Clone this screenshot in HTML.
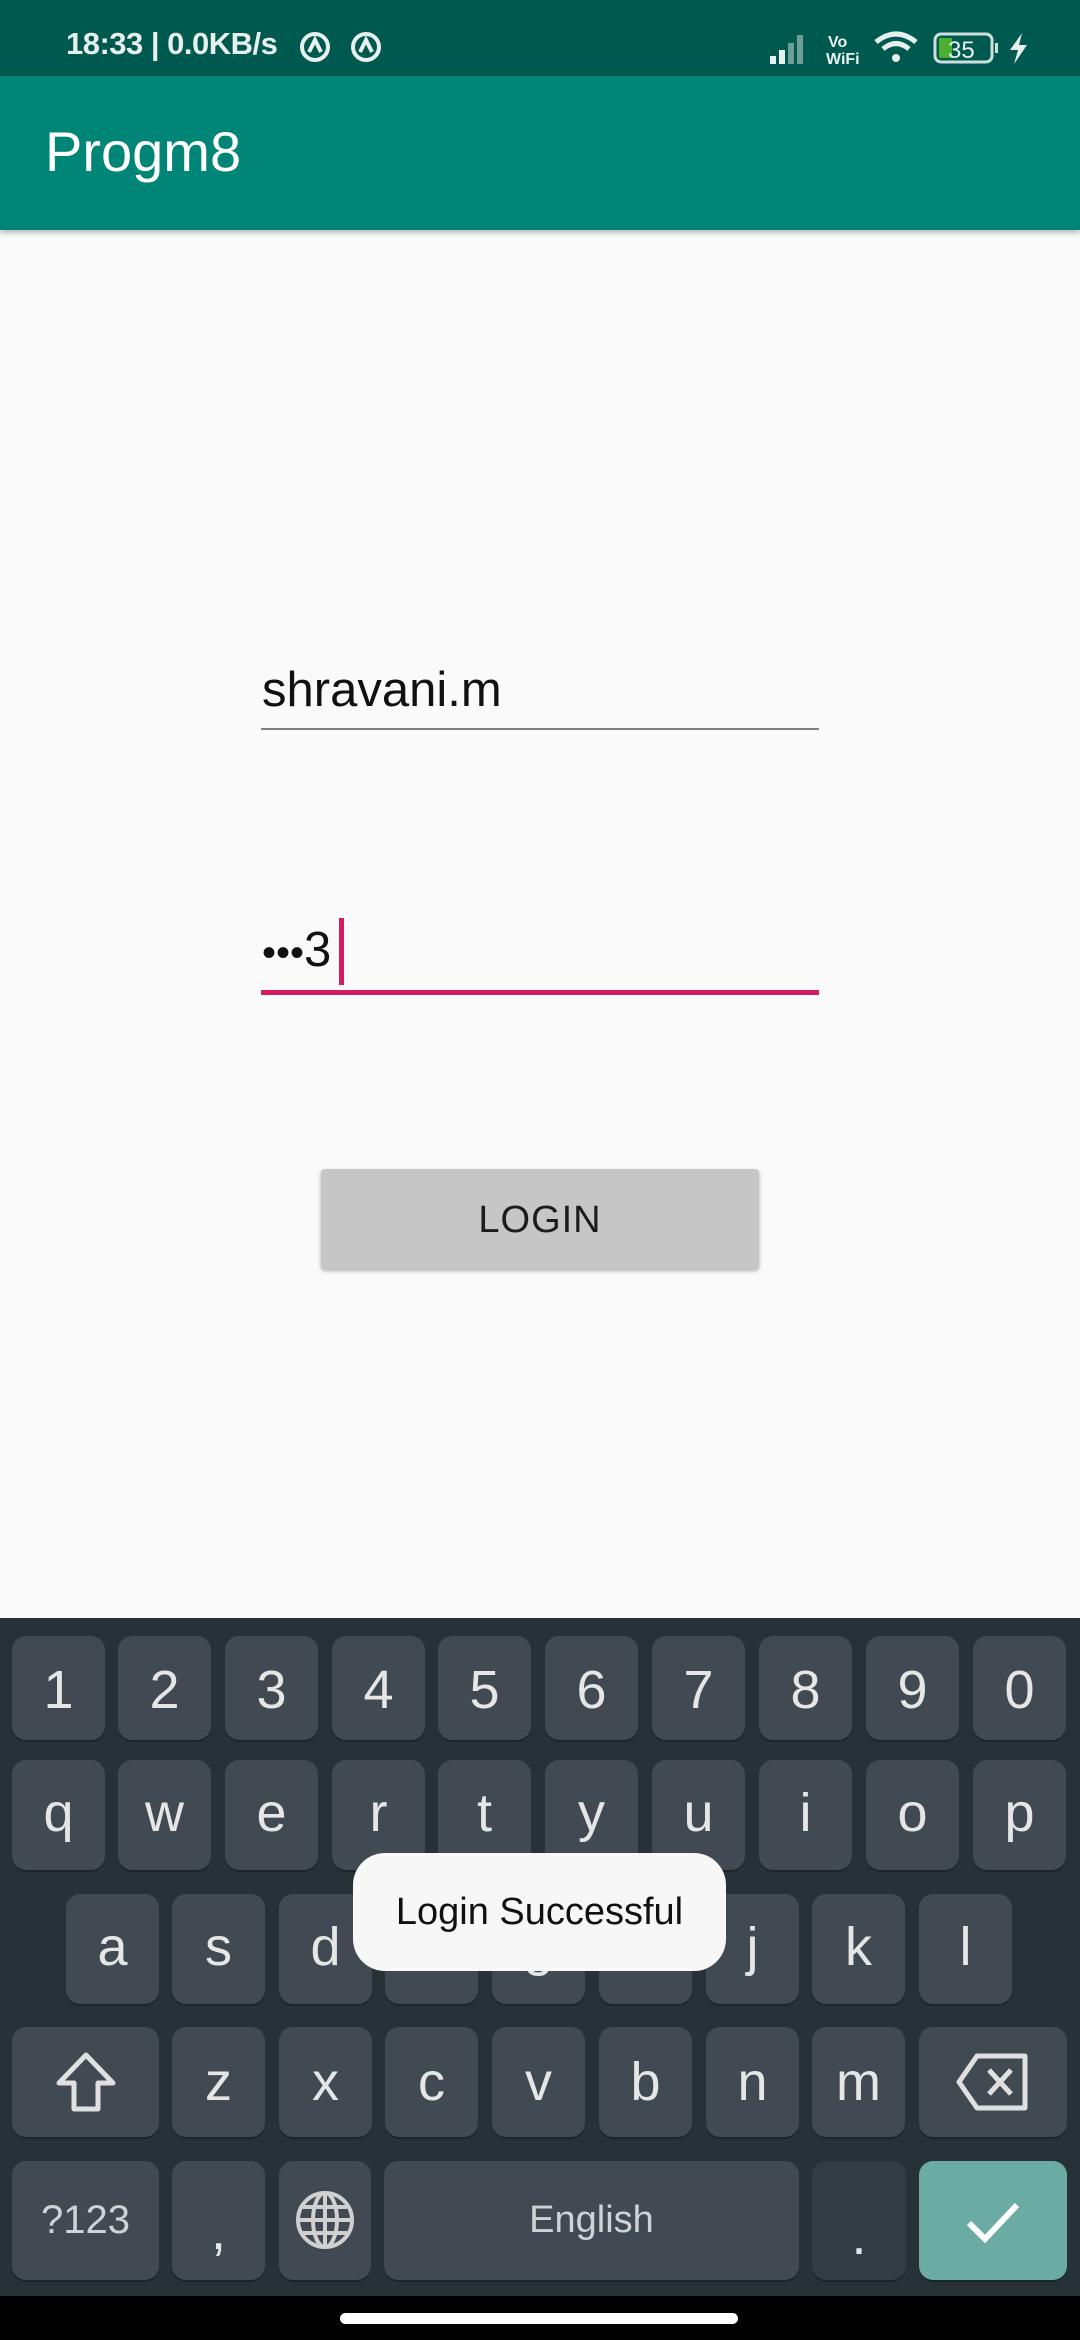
<!DOCTYPE html>
<html><head><meta charset="utf-8"><style>
*{margin:0;padding:0;box-sizing:border-box}
body{width:1080px;height:2340px;position:relative;background:#fafafa;font-family:"Liberation Sans",sans-serif;overflow:hidden}
.abs{position:absolute}
.sb{left:0;top:0;width:1080px;height:76px;background:#00594e}
.ab{left:0;top:76px;width:1080px;height:154px;background:#008577;box-shadow:0 3px 5px rgba(0,0,0,.25)}
.kb{left:0;top:1618px;width:1080px;height:678px;background:#263238}
.k{position:absolute;background:#414a52;border-radius:14px;color:#e6e6e6;font-size:54px;text-align:center;box-shadow:0 2px 0 rgba(0,0,0,.25)}
.r1 .k{top:18px;height:104px;line-height:108px}
.r2 .k{top:142px;height:110px;line-height:106px}
.r3 .k{top:276px;height:110px;line-height:106px}
.r4 .k{top:409px;height:110px;line-height:110px}
.r5 .k{top:543px;height:119px;line-height:119px}
.nav{left:0;top:2296px;width:1080px;height:44px;background:#000}
</style></head><body>
<div class="abs sb"></div>
<div class="abs" style="left:66px;top:26px;color:#e8f0ee;font-size:31px;font-weight:bold;letter-spacing:-0.5px">18:33 | 0.0KB/s</div>
<svg class="abs" style="left:298px;top:30px" width="90" height="36" viewBox="0 0 90 36">
<circle cx="17" cy="17" r="13" fill="none" stroke="#e8f0ee" stroke-width="4"/><path d="M11 22 L17 10 L23 22" fill="none" stroke="#e8f0ee" stroke-width="4"/>
<circle cx="68" cy="17" r="13" fill="none" stroke="#e8f0ee" stroke-width="4"/><path d="M62 22 L68 10 L74 22" fill="none" stroke="#e8f0ee" stroke-width="4"/>
</svg>
<svg class="abs" style="left:768px;top:30px" width="270" height="38" viewBox="0 0 270 38">
<rect x="2" y="26" width="6" height="8" fill="#e8f0ee"/><rect x="11" y="20" width="6" height="14" fill="#e8f0ee"/><rect x="20" y="13" width="6" height="21" fill="#6f9e95"/><rect x="29" y="5" width="6" height="29" fill="#6f9e95"/>
<text x="60" y="17" font-size="16" font-weight="bold" fill="#e8f0ee" font-family="Liberation Sans">Vo</text>
<text x="58" y="34" font-size="16" font-weight="bold" fill="#e8f0ee" font-family="Liberation Sans">WiFi</text>
<path d="M108 12 Q128 -4 148 12" fill="none" stroke="#e8f0ee" stroke-width="5"/><path d="M115 19 Q128 8 141 19" fill="none" stroke="#e8f0ee" stroke-width="5"/><circle cx="128" cy="28" r="4" fill="#e8f0ee"/>
<rect x="167" y="4" width="57" height="28" rx="6" fill="none" stroke="#cfe0dc" stroke-width="3"/><rect x="171" y="8" width="13" height="20" fill="#4caf30"/>
<text x="180" y="28" font-size="24" fill="#e8f0ee" font-family="Liberation Sans">35</text>
<rect x="227" y="13" width="3" height="10" fill="#cfe0dc"/>
<path d="M254 3 L242 20 L250 20 L246 34 L259 15 L251 15 Z" fill="#e8f0ee"/>
</svg>
<div class="abs ab"></div>
<div class="abs" style="left:45px;top:120px;color:#fff;font-size:56px;line-height:64px">Progm8</div>

<div class="abs" style="left:262px;top:662px;font-size:49px;color:#111">shravani.m</div>
<div class="abs" style="left:261px;top:728px;width:558px;height:2px;background:#808080"></div>
<div class="abs" style="left:262px;top:922px;font-size:49px;color:#111"><span style="font-size:40px">•••</span>3</div>
<div class="abs" style="left:339px;top:918px;width:5px;height:67px;background:#d41c63"></div>
<div class="abs" style="left:261px;top:990px;width:558px;height:5px;background:#d41c63"></div>

<div class="abs" style="left:321px;top:1169px;width:438px;height:100px;background:#c6c6c6;border-radius:4px;box-shadow:0 2px 4px rgba(0,0,0,.3);text-align:center;line-height:102px;font-size:38px;color:#1c1c1c;letter-spacing:1px">LOGIN</div>

<div class="abs kb">
<div class="r1">
<div class="k" style="left:12px;width:93px">1</div><div class="k" style="left:118px;width:93px">2</div><div class="k" style="left:225px;width:93px">3</div><div class="k" style="left:332px;width:93px">4</div><div class="k" style="left:438px;width:93px">5</div><div class="k" style="left:545px;width:93px">6</div><div class="k" style="left:652px;width:93px">7</div><div class="k" style="left:759px;width:93px">8</div><div class="k" style="left:866px;width:93px">9</div><div class="k" style="left:973px;width:93px">0</div>
</div>
<div class="r2">
<div class="k" style="left:12px;width:93px">q</div><div class="k" style="left:118px;width:93px">w</div><div class="k" style="left:225px;width:93px">e</div><div class="k" style="left:332px;width:93px">r</div><div class="k" style="left:438px;width:93px">t</div><div class="k" style="left:545px;width:93px">y</div><div class="k" style="left:652px;width:93px">u</div><div class="k" style="left:759px;width:93px">i</div><div class="k" style="left:866px;width:93px">o</div><div class="k" style="left:973px;width:93px">p</div>
</div>
<div class="r3">
<div class="k" style="left:66px;width:93px">a</div><div class="k" style="left:172px;width:93px">s</div><div class="k" style="left:279px;width:93px">d</div><div class="k" style="left:385px;width:93px">f</div><div class="k" style="left:492px;width:93px">g</div><div class="k" style="left:599px;width:93px">h</div><div class="k" style="left:706px;width:93px">j</div><div class="k" style="left:812px;width:93px">k</div><div class="k" style="left:919px;width:93px">l</div>
</div>
<div class="r4">
<div class="k" style="left:12px;width:147px"><svg width="70" height="70" viewBox="0 0 70 70" style="margin-top:20px"><path d="M35 8 L62 36 L47 36 L47 62 L23 62 L23 36 L8 36 Z" fill="none" stroke="#e0e0e0" stroke-width="5" stroke-linejoin="round"/></svg></div>
<div class="k" style="left:172px;width:93px">z</div><div class="k" style="left:279px;width:93px">x</div><div class="k" style="left:385px;width:93px">c</div><div class="k" style="left:492px;width:93px">v</div><div class="k" style="left:599px;width:93px">b</div><div class="k" style="left:706px;width:93px">n</div><div class="k" style="left:812px;width:93px">m</div>
<div class="k" style="left:919px;width:148px"><svg width="76" height="60" viewBox="0 0 76 60" style="margin-top:25px"><path d="M22 4 L70 4 L70 56 L22 56 L4 30 Z" fill="none" stroke="#e0e0e0" stroke-width="5" stroke-linejoin="round"/><path d="M34 18 L56 42 M56 18 L34 42" stroke="#e0e0e0" stroke-width="5"/></svg></div>
</div>
<div class="r5">
<div class="k" style="left:12px;width:147px;font-size:40px;color:#cfd3d6">?123</div>
<div class="k" style="left:172px;width:93px;line-height:140px">,</div>
<div class="k" style="left:279px;width:92px"><svg width="62" height="62" viewBox="0 0 62 62" style="margin-top:28px"><g fill="none" stroke="#d0d0d0" stroke-width="4"><circle cx="31" cy="31" r="27"/><ellipse cx="31" cy="31" rx="12" ry="27"/><path d="M4 31 H58 M31 4 V58 M9 18 H53 M9 44 H53"/></g></svg></div>
<div class="k" style="left:384px;width:415px;font-size:38px;color:#cfd3d6">English</div>
<div class="k" style="left:812px;width:94px;background:#323c43;line-height:150px">.</div>
<div class="k" style="left:919px;width:148px;background:#6aaba4"><svg width="60" height="50" viewBox="0 0 60 50" style="margin-top:36px"><path d="M6 26 L22 42 L54 8" fill="none" stroke="#fff" stroke-width="6"/></svg></div>
</div>
</div>

<div class="abs" style="left:353px;top:1853px;width:373px;height:118px;background:#f7f7f7;border-radius:32px;text-align:center;line-height:118px;font-size:38px;color:#111">Login Successful</div>

<div class="abs nav"></div>
<div class="abs" style="left:340px;top:2313px;width:398px;height:11px;border-radius:6px;background:#fff"></div>
</body></html>
